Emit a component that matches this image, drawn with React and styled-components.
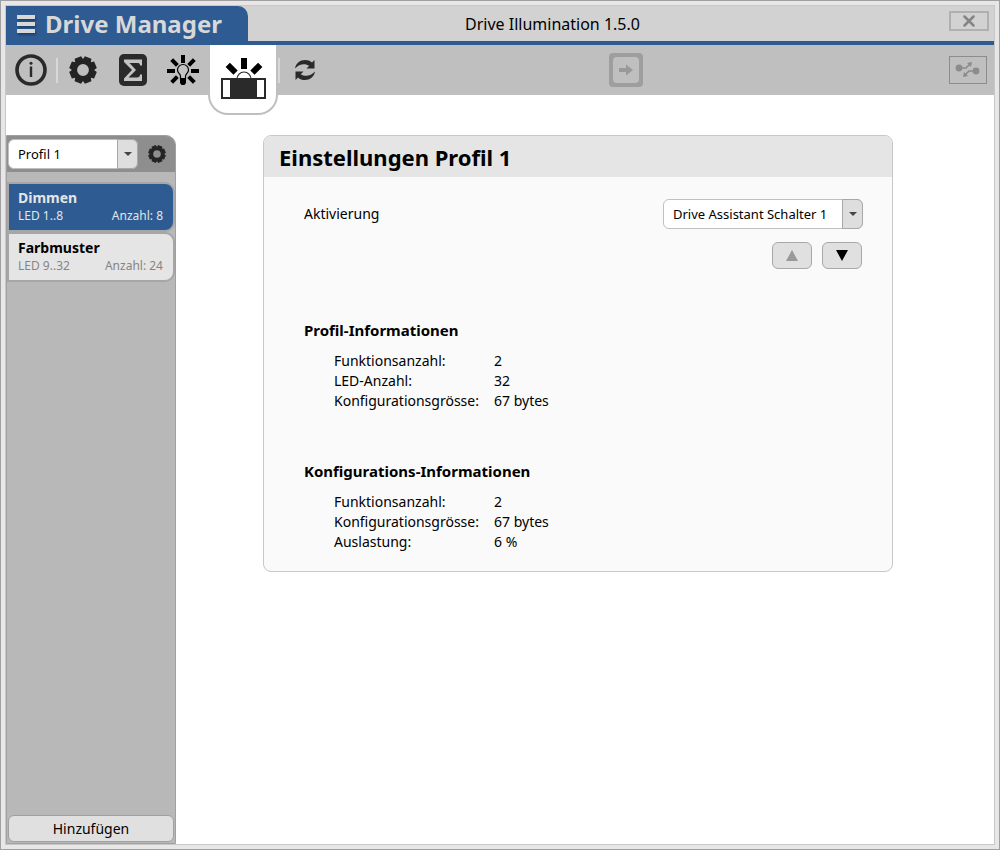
import React from 'react';
import styled, { createGlobalStyle } from 'styled-components';

const Global = createGlobalStyle`
  *, *::before, *::after { box-sizing: border-box; }
  html, body, #root { height: 100%; margin: 0; }
  body {
    font-family: "Noto Sans", "Open Sans", sans-serif;
    font-size: 14px;
    line-height: 20px;
    color: #000;
    background: #fff;
  }
  button, select { font: inherit; color: inherit; margin: 0; }
  svg { display: block; }
`;

const Frame = styled.div`
  min-height: 100%;
  display: flex;
  padding: 4px;
  border: 1px solid #a0a0a0;
  background: #e8e6e6;
`;
const Window = styled.div`
  flex: 1;
  min-width: 0;
  display: flex;
  flex-direction: column;
  border: 1px solid #c8c8c8;
  background: #fff;
`;
const TitleBar = styled.header`
  display: flex;
  height: 39px;
  background: #d2d2d2;
  border-bottom: 4px solid #2d5b92;
`;
const Brand = styled.button`
  display: flex;
  align-items: center;
  gap: 10px;
  width: 242px;
  padding: 0 11px;
  border: 0;
  border-top-right-radius: 10px;
  background: #2d5b92;
  color: #d8d8d8;
  font-size: 24px;
  font-weight: 700;
  line-height: 32px;
  white-space: nowrap;
  svg { filter: drop-shadow(1px 2px 1px #1d3f68); }
`;
const Title = styled.h1`
  flex: 1;
  margin: 0;
  padding-left: 217px;
  font-size: 16px;
  font-weight: 400;
  line-height: 36px;
`;
const CloseButton = styled.button`
  display: grid;
  place-items: center;
  width: 40px;
  height: 20px;
  margin: 5px 5px 0 0;
  padding: 0;
  border: 2px solid #b0b0b0;
  background: #d2d2d2;
  color: #858585;
`;
const Toolbar = styled.nav`
  display: flex;
  height: 50px;
  background: #bfbfbf;
`;
const Tool = styled.button`
  display: grid;
  place-items: center;
  width: ${p => p.$width || 50}px;
  height: 50px;
  padding: 0;
  border: 0;
  background: none;
`;
const ActiveTool = styled(Tool)`
  height: 70px;
  width: 70px;
  border: 2px solid #bfbfbf;
  border-top: 0;
  border-radius: 0 0 20px 20px;
  background: #fff;
`;
const Divider = styled.span`
  width: 2px;
  height: 25px;
  margin-top: 13px;
  background: #d8d8d8;
`;
const Spacer = styled.span`
  flex: ${p => p.$grow};
`;
const ConnectButton = styled.button`
  display: grid;
  place-items: center;
  width: 38px;
  height: 28px;
  margin: 11px 7px 0 0;
  padding: 0;
  border: 1px solid #8c8c8c;
  background: none;
  color: #8c8c8c;
`;
const Content = styled.div`
  flex: 1;
  display: flex;
  padding-top: 40px;
`;
const Sidebar = styled.aside`
  display: flex;
  flex-direction: column;
  width: 170px;
  border: 1px solid #a0a0a0;
  border-top-right-radius: 10px;
  background: #b8b8b8;
`;
const SidebarHead = styled.div`
  display: flex;
  align-items: center;
  gap: 10px;
  height: 36px;
  padding: 0 8px 0 1px;
  border-top-right-radius: 9px;
  background: #8e8e8e;
`;
const SelectWrap = styled.span`
  position: relative;
  display: block;
  width: ${p => p.$width}px;
  height: 30px;
`;
const Select = styled.select`
  appearance: none;
  width: 100%;
  height: 30px;
  padding: 0 22px 0 9px;
  border: 1px solid #c0c0c0;
  border-radius: 6px;
  background: #fff;
  font-size: 13px;
`;
const SelectArrow = styled.span`
  position: absolute;
  top: 0;
  right: 0;
  display: grid;
  place-items: center;
  width: 21px;
  height: 30px;
  border: 1px solid #a8a8a8;
  border-radius: 0 6px 6px 0;
  background: #dedede;
  pointer-events: none;
`;
const IconButton = styled.button`
  padding: 0;
  border: 0;
  background: none;
`;
const FunctionList = styled.div`
  flex: 1;
  display: flex;
  flex-direction: column;
  padding-top: 10px;
`;
const FunctionItem = styled.button`
  display: grid;
  grid-template-columns: 1fr auto;
  align-content: start;
  height: 50px;
  padding: 4px 10px 0 9px;
  border: 2px solid #a6a6a6;
  border-radius: 0 10px 10px 0;
  background: ${p => (p.$active ? '#2d5b92' : '#e5e5e5')};
  color: ${p => (p.$active ? '#e5e5e5' : '#858585')};
  text-align: left;
  font-size: 12px;
  line-height: 16px;
`;
const FunctionName = styled.strong`
  grid-column: 1 / -1;
  color: ${p => (p.$active ? '#e5e5e5' : '#000')};
  font-size: 14px;
  line-height: 20px;
`;
const AddButton = styled.button`
  height: 27px;
  margin: 0 1px 1px;
  padding: 0;
  border: 1px solid #a0a0a0;
  border-radius: 6px;
  background: #e0e0e0;
`;
const Main = styled.main`
  flex: 1;
  padding: 0 101px 0 87px;
`;
const Panel = styled.section`
  border: 1px solid #c8c8c8;
  border-radius: 8px;
  background: #fafafa;
  overflow: hidden;
`;
const PanelTitle = styled.h2`
  margin: 0;
  padding: 2px 15px 0;
  background: #e5e5e5;
  font-size: 22px;
  line-height: 39px;
`;
const PanelBody = styled.div`
  padding: 22px 29px 19px 40px;
`;
const Field = styled.div`
  display: flex;
  align-items: center;
  justify-content: space-between;
`;
const MoveButtons = styled.div`
  display: flex;
  justify-content: flex-end;
  gap: 10px;
  margin: 13px 1px 51px 0;
`;
const MoveButton = styled.button`
  display: grid;
  place-items: center;
  width: 40px;
  height: 27px;
  padding: 0;
  border: 1px solid #a8a8a8;
  border-radius: 6px;
  background: #e0e0e0;
  color: ${p => (p.disabled ? '#999' : '#000')};
`;
const Info = styled.section`
  & + & { margin-top: 50px; }
`;
const InfoTitle = styled.h3`
  margin: 0 0 10px;
  font-size: 15px;
  line-height: 21px;
`;
const InfoList = styled.dl`
  display: grid;
  grid-template-columns: 160px 1fr;
  margin: 0 0 0 30px;
  dd { margin: 0; }
`;

function Gear({ size }) {
  return (
    <svg width={size} height={size} viewBox="-14 -14 28 28">
      {[22.5, 67.5, 112.5, 157.5, 202.5, 247.5, 292.5, 337.5].map(a => (
        <path key={a} d="M-4.500-9L-3.500-13.500H3.500L4.500-9z" fill="#242424" transform={`rotate(${a})`} />
      ))}
      <circle r="8.200" fill="none" stroke="#242424" strokeWidth="4.600" />
    </svg>
  );
}
const InfoIcon = () => (
  <svg width="32" height="32" viewBox="0 0 32 32" fill="none" stroke="#2a2a2a">
    <circle cx="16" cy="16" r="14" strokeWidth="3.600" />
    <path d="M16 12.500V23" strokeWidth="2.400" />
    <circle cx="16" cy="9.300" r="1.500" fill="#2a2a2a" stroke="none" />
  </svg>
);
const SigmaIcon = () => (
  <svg width="30" height="32" viewBox="0 0 30 32">
    <rect x="1" width="28" height="32" rx="5" fill="#2a2a2a" />
    <path d="M6 5.500h18v6h-2c0-2-1-2.500-3-2.500h-7.500l6.500 7-7.500 7.500H19c2 0 3-1 3-3h2v6.500H6v-2.500l8-8.500-8-8z" fill="#c4c4c4" />
  </svg>
);
const BulbIcon = () => (
  <svg width="34" height="34" viewBox="-17 -18 34 34">
    {[-135, -90, -45, 0, 45, 90, 135].map(a => (
      <rect key={a} x="-2" y="-16" width="4" height="8" transform={`rotate(${a})`} />
    ))}
    <path d="M-2.500 8v-3c0-2-3-3-3-6a5.500 5.500 0 0 1 11 0c0 3-3 4-3 6v3z" fill="#c4c4c4" stroke="#000" strokeWidth="1.200" />
    <path d="M-3 7h6v5l-1.500 2h-3L-3 12z" />
  </svg>
);
const LampIcon = () => (
  <svg width="46" height="44" viewBox="-1 0 46 44">
    <rect x="20" y="1" width="6" height="11" />
    <rect x="8" y="6" width="6" height="11" transform="rotate(-45 11 12)" />
    <rect x="32" y="6" width="6" height="11" transform="rotate(45 35 12)" />
    <path d="M16 22a7 7 0 0 1 14 0" fill="none" stroke="#2a2a2a" strokeWidth="1.200" />
    <path d="M0 21h45v21H0z" fill="#2a2a2a" />
    <path d="M2 23h7v17H2zM36 23h7v17h-7z" fill="#fff" />
  </svg>
);
const SyncIcon = () => (
  <svg width="22" height="22" viewBox="0 0 22 22" fill="#2a2a2a">
    <path d="M1 9.500C2 4 6 1 11 1c3 0 5 .8 7 2.600L20.500 1v8.500h-8l2.700-2.700C11 4 5 5 1 9.500z" />
    <path d="M21 12.500c-1 5.500-5 8.500-10 8.500-3 0-5-.8-7-2.600L1.500 21v-8.500h8l-2.700 2.700c4.200 2.800 10.200 1.800 14.200-2.700z" />
  </svg>
);
const ExportIcon = () => (
  <svg width="34" height="34" viewBox="0 0 34 34">
    <rect width="34" height="34" rx="4" fill="#9c9f9e" />
    <rect x="4" y="4" width="26" height="26" rx="4" fill="#bfbfbf" />
    <path d="M10 15h7v-3.500l7 5.500-7 5.500v-3.500h-7z" fill="#979a99" />
  </svg>
);
const ConnectIcon = () => (
  <svg width="26" height="18" viewBox="0 0 26 18" fill="currentColor">
    <circle cx="4" cy="7" r="3.400" />
    <circle cx="21" cy="10" r="3.400" />
    <path d="M6 7h5l4-4M20 10h-6l-4 4" fill="none" stroke="currentColor" strokeWidth="1.700" />
    <path d="M12 2l5-1-1 5zM8 16l1-5 4 4z" />
  </svg>
);
const Caret = () => (
  <svg width="8" height="4" viewBox="0 0 8 4"><path d="M0 0h8L4 4z" fill="#444" /></svg>
);
const Triangle = ({ down }) => (
  <svg width="12" height="11" viewBox="0 0 12 11" fill="currentColor">
    <path d={down ? 'M0 0h12L6 11z' : 'M0 11h12L6 0z'} />
  </svg>
);

function Dropdown({ width, children, ...rest }) {
  return (
    <SelectWrap $width={width}>
      <Select {...rest}>{children}</Select>
      <SelectArrow><Caret /></SelectArrow>
    </SelectWrap>
  );
}

function InfoBlock({ title, rows }) {
  return (
    <Info>
      <InfoTitle>{title}</InfoTitle>
      <InfoList>
        {rows.map(([k, v]) => (
          <React.Fragment key={k}><dt>{k}</dt><dd>{v}</dd></React.Fragment>
        ))}
      </InfoList>
    </Info>
  );
}

const FUNCTIONS = [
  { name: 'Dimmen', range: 'LED 1..8', count: 'Anzahl: 8' },
  { name: 'Farbmuster', range: 'LED 9..32', count: 'Anzahl: 24' },
];

export default function App() {
  return (
    <>
      <Global />
      <Frame>
        <Window>
          <TitleBar>
            <Brand>
              <svg width="18" height="18" viewBox="0 0 18 18" fill="#d8d8d8"><path d="M0 0h18v4H0zM0 7h18v4H0zM0 14h18v4H0z" /></svg>
              Drive Manager
            </Brand>
            <Title>Drive Illumination 1.5.0</Title>
            <CloseButton aria-label="Schliessen">
              <svg width="12" height="12" viewBox="0 0 12 12" fill="none" stroke="currentColor" strokeWidth="2.500" strokeLinecap="round"><path d="M1.500 1.500l9 9M10.500 1.500l-9 9" /></svg>
            </CloseButton>
          </TitleBar>
          <Toolbar>
            <Tool aria-label="Info"><InfoIcon /></Tool>
            <Divider />
            <Tool aria-label="Einstellungen"><Gear size={28} /></Tool>
            <Tool aria-label="Summe"><SigmaIcon /></Tool>
            <Tool aria-label="Licht"><BulbIcon /></Tool>
            <ActiveTool aria-label="Beleuchtung"><LampIcon /></ActiveTool>
            <Divider />
            <Tool aria-label="Aktualisieren"><SyncIcon /></Tool>
            <Spacer $grow={279} />
            <Tool $width={34} aria-label="Übertragen" disabled><ExportIcon /></Tool>
            <Spacer $grow={305} />
            <ConnectButton aria-label="Verbindung"><ConnectIcon /></ConnectButton>
          </Toolbar>
          <Content>
            <Sidebar>
              <SidebarHead>
                <Dropdown width={130} aria-label="Profil"><option>Profil 1</option></Dropdown>
                <IconButton aria-label="Profil bearbeiten"><Gear size={18} /></IconButton>
              </SidebarHead>
              <FunctionList>
                {FUNCTIONS.map((f, i) => (
                  <FunctionItem key={f.name} $active={i === 0}>
                    <FunctionName $active={i === 0}>{f.name}</FunctionName>
                    <span>{f.range}</span>
                    <span>{f.count}</span>
                  </FunctionItem>
                ))}
              </FunctionList>
              <AddButton>Hinzufügen</AddButton>
            </Sidebar>
            <Main>
              <Panel>
                <PanelTitle>Einstellungen Profil 1</PanelTitle>
                <PanelBody>
                  <Field>
                    <label htmlFor="activation">Aktivierung</label>
                    <Dropdown id="activation" width={200}><option>Drive Assistant Schalter 1</option></Dropdown>
                  </Field>
                  <MoveButtons>
                    <MoveButton disabled aria-label="Nach oben"><Triangle /></MoveButton>
                    <MoveButton aria-label="Nach unten"><Triangle down /></MoveButton>
                  </MoveButtons>
                  <InfoBlock title="Profil-Informationen" rows={[['Funktionsanzahl:', '2'], ['LED-Anzahl:', '32'], ['Konfigurationsgrösse:', '67 bytes']]} />
                  <InfoBlock title="Konfigurations-Informationen" rows={[['Funktionsanzahl:', '2'], ['Konfigurationsgrösse:', '67 bytes'], ['Auslastung:', '6 %']]} />
                </PanelBody>
              </Panel>
            </Main>
          </Content>
        </Window>
      </Frame>
    </>
  );
}
